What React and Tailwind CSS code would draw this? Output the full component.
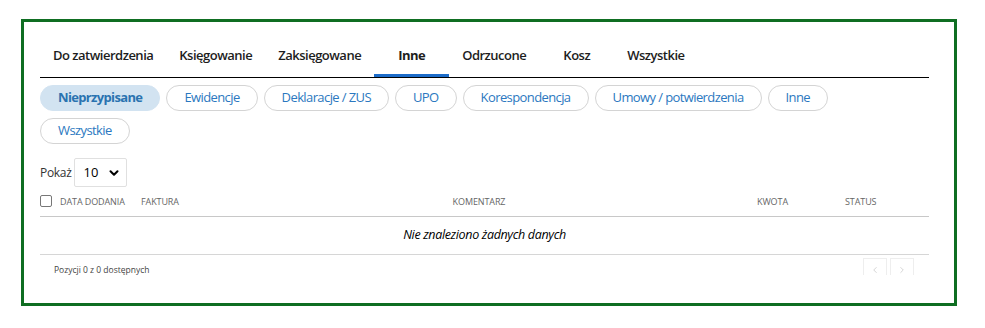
import { ChevronDown, ChevronLeft, ChevronRight } from 'lucide-react';

const TABS = ['Do zatwierdzenia', 'Księgowanie', 'Zaksięgowane', 'Inne', 'Odrzucone', 'Kosz', 'Wszystkie'];
const ACTIVE_TAB = 'Inne';

const PILLS = [
  'Nieprzypisane',
  'Ewidencje',
  'Deklaracje / ZUS',
  'UPO',
  'Korespondencja',
  'Umowy / potwierdzenia',
  'Inne',
  'Wszystkie',
];

export default function App() {
  return (
    <div className="w-[985px] h-[328px] bg-white pt-[19px] pl-[21px] font-['Open_Sans',sans-serif]">
      <div className="w-[936px] h-[287px] border-[3px] border-[#0f6e22] pl-[16px] pr-[25px] pt-[13px]">
        {/* Tabs */}
        <div className="flex border-b border-black">
          {TABS.map((tab) => (
            <div
              key={tab}
              className={`relative h-[42px] min-w-[75px] px-[13px] flex items-center justify-center text-[13px] tracking-[-0.5px] text-[#1d1d1d] ${
                tab === ACTIVE_TAB ? 'font-bold' : 'font-semibold'
              }`}
            >
              {tab}
              {tab === ACTIVE_TAB && <span className="absolute left-0 right-0 bottom-0 h-[3px] bg-[#1c6cc9]" />}
            </div>
          ))}
        </div>

        {/* Category pills */}
        <div className="w-[860px] flex flex-wrap gap-x-[6px] gap-y-[7px] mt-[7px]">
          {PILLS.map((pill, i) => (
            <div
              key={i}
              className={`h-[26px] px-[17px] rounded-full flex items-center text-[13px] border ${
                i === 0
                  ? 'bg-[#d2e3f1] border-[#d2e3f1] text-[#2a73b0] font-bold tracking-[-0.65px]'
                  : 'bg-white border-[#d4d4d4] text-[#2b78c0] tracking-[-0.6px]'
              }`}
            >
              {pill}
            </div>
          ))}
        </div>

        {/* Page size */}
        <div className="flex items-center gap-[2px] mt-[14px]">
          <span className="text-[12px] tracking-[-0.3px] text-[#333]">Pokaż</span>
          <div className="w-[53px] h-[29px] border border-[#e0e0e0] rounded-[2px] flex items-center justify-between pl-[9px] pr-[5px]">
            <span className="text-[13px] text-black">10</span>
            <ChevronDown className="w-[14px] h-[14px] text-black" strokeWidth={3.5} />
          </div>
        </div>

        {/* Table header */}
        <div className="flex items-center h-[30px] border-b border-[#c8c8c8] text-[9px] tracking-[-0.1px] text-[#666] uppercase">
          <span className="w-[20px] flex">
            <span className="w-[12px] h-[12px] border border-[#777] rounded-[2px] -mt-[1px]" />
          </span>
          <span className="w-[81px]">Data dodania</span>
          <span className="w-[100px]">Faktura</span>
          <span className="w-[476px] text-center">Komentarz</span>
          <span className="w-[128px] pl-[40px]">Kwota</span>
          <span>Status</span>
        </div>

        {/* Empty row */}
        <div className="h-[38px] flex items-center justify-center border-b border-[#d6d6d6] text-[12.5px] tracking-[-0.35px] italic text-black">
          Nie znaleziono żadnych danych
        </div>

        {/* Footer */}
        <div className="flex justify-between pl-[14px] pr-[15px]">
          <span className="text-[8.5px] text-[#444] mt-[9px]">Pozycji 0 z 0 dostępnych</span>
          <div className="flex gap-[3px] mt-[3px] h-[17px] overflow-hidden">
            <span className="w-[24px] h-[24px] border border-[#eee] flex items-center justify-center text-[#ccc]">
              <ChevronLeft className="w-[10px] h-[10px]" strokeWidth={2} />
            </span>
            <span className="w-[24px] h-[24px] border border-[#eee] flex items-center justify-center text-[#ccc]">
              <ChevronRight className="w-[10px] h-[10px]" strokeWidth={2} />
            </span>
          </div>
        </div>
      </div>
    </div>
  );
}
